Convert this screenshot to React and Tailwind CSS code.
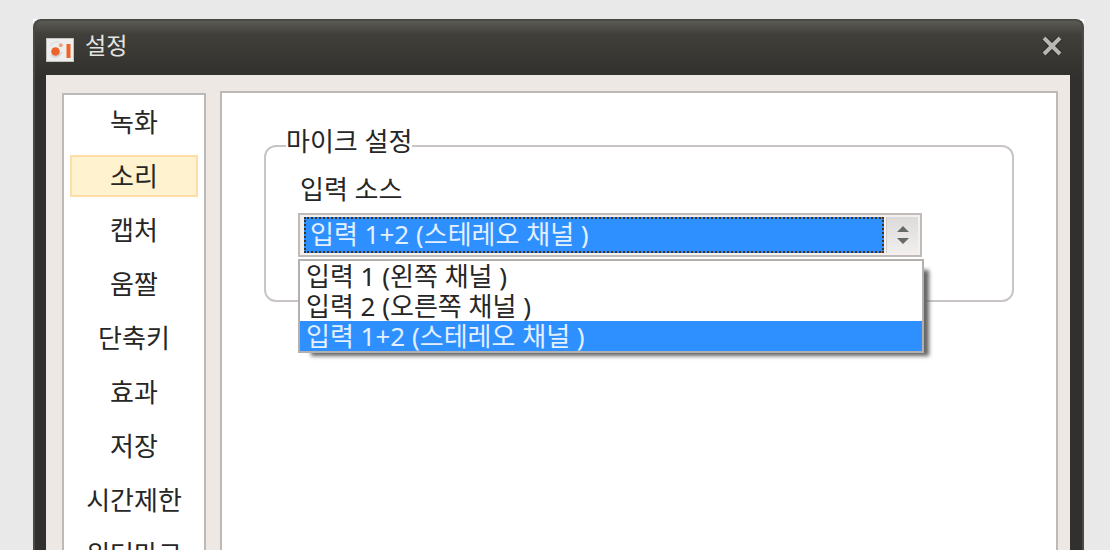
import { useState } from 'react';

const TABS = ['녹화', '소리', '캡처', '움짤', '단축키', '효과', '저장', '시간제한', '워터마크'];

const SOURCES = ['입력 1 (왼쪽 채널 )', '입력 2 (오른쪽 채널 )', '입력 1+2 (스테레오 채널 )'];

function AppLogo() {
  return (
    <svg viewBox="0 0 28 24" className="w-7 h-6 flex-shrink-0" aria-hidden="true">
      <rect x="0.5" y="0.5" width="27" height="23" fill="#efeeee" stroke="#c4c2c0" />
      <path d="M4 8 Q8 3 13 4" fill="none" stroke="#e2e2e2" strokeWidth="2" />
      <path d="M5 17 Q11 22 16 14" fill="none" stroke="#d6d6d6" strokeWidth="2" />
      <circle cx="9.5" cy="13.5" r="4.3" fill="#ec642b" />
      <circle cx="14.8" cy="7.2" r="2" fill="#f0a183" />
      <rect x="20.5" y="6" width="4" height="14" fill="#ec6526" />
    </svg>
  );
}

function TitleBar() {
  return (
    <header className="h-[54px] flex items-start justify-between pl-[11px] pr-5 bg-linear-to-b from-[#5b5a54] from-0% via-[#403f3a] via-25% to-[#32312d]">
      <div className="flex items-start gap-[11px]">
        <div className="pt-[17px]"><AppLogo /></div>
        <h1 className="pt-[7px] text-[23px] leading-[34px] text-[#e6e4e0]">설정</h1>
      </div>
      <button type="button" aria-label="닫기" className="mt-[15px] w-5 h-5">
        <svg viewBox="0 0 20 20" className="w-5 h-5">
          <path d="M2 2 L18 18 M18 2 L2 18" stroke="#272623" strokeWidth="6" fill="none" />
          <path d="M2 2 L18 18 M18 2 L2 18" stroke="#b8b7b4" strokeWidth="4" fill="none" />
        </svg>
      </button>
    </header>
  );
}

function Sidebar({ active, onSelect }) {
  return (
    <nav className="w-36 flex-shrink-0 mt-[2px] border-2 border-b-0 border-[#bdb9b6] bg-white p-[6px] flex flex-col gap-3 overflow-hidden">
      {TABS.map(tab => (
        <button
          key={tab}
          type="button"
          onClick={() => onSelect(tab)}
          className={`h-[42px] flex-shrink-0 border-2 text-[26px] leading-[38px] text-center whitespace-nowrap ${
            active === tab ? 'bg-[#fff3cf] border-[#ffdda6]' : 'border-transparent'
          }`}
        >
          {tab}
        </button>
      ))}
    </nav>
  );
}

function SourceSelect() {
  const [source, setSource] = useState(SOURCES[2]);
  const [open, setOpen] = useState(true);

  const pick = (item) => {
    setSource(item);
    setOpen(false);
  };

  return (
    <div className="relative">
      <div className="h-11 flex border-2 border-[#c0bbb8] bg-[#f3f0ed] p-[2px] pl-1">
        <select
          id="source"
          value={source}
          onChange={e => setSource(e.target.value)}
          className="flex-1 min-w-0 h-9 appearance-none rounded-none border-2 border-dotted border-[#40301f] bg-[#2e8fff] pl-1 pb-[2px] text-[26px] leading-[28px] text-[#e3f0ff] outline-none"
        >
          {SOURCES.map(item => <option key={item}>{item}</option>)}
        </select>
        <button
          type="button"
          aria-label="목록 열기"
          onClick={() => setOpen(!open)}
          className="w-8 h-9 ml-[2px] flex items-center justify-center border-l border-[#d0ccca] bg-linear-to-b from-[#dcdbd9] to-[#f0efed]"
        >
          <svg viewBox="0 0 14 20" className="w-[14px] h-5">
            <path d="M7 1 L13 7 H1 Z M1 13 H13 L7 19 Z" fill="#666a69" />
          </svg>
        </button>
      </div>

      {open && (
        <ul
          role="listbox"
          aria-label="입력 소스"
          className="absolute left-0 -right-[2px] top-[46px] border-2 border-[#b3b0ae] bg-white shadow-[9px_7px_4px_-4px_#666666]"
        >
          {SOURCES.map(item => (
            <li
              key={item}
              role="option"
              aria-selected={source === item}
              onClick={() => pick(item)}
              className={`h-[30px] pl-[6px] text-[26px] leading-[30px] whitespace-nowrap ${
                source === item ? 'bg-[#2e8fff] text-[#e3f0ff]' : 'text-[#262626]'
              }`}
            >
              {item}
            </li>
          ))}
        </ul>
      )}
    </div>
  );
}

export default function App() {
  const [tab, setTab] = useState('소리');

  return (
    <div className="h-screen overflow-hidden flex flex-col bg-[#e9e9e9] pt-[19px] pl-[33px] pr-[26px] text-[#262626] font-['Noto_Sans','Noto_Sans_CJK_KR',sans-serif]">
      <div className="flex-1 min-h-0 flex flex-col bg-white">
        <div className="flex-1 min-h-0 flex flex-col rounded-t-lg border-2 border-b-0 border-[#4a4a45] bg-[#32302e] overflow-hidden">
          <TitleBar />
          <div className="flex-1 min-h-0 ml-[11px] mr-3 flex gap-[14px] bg-[#ede8e4] pt-4 pl-4 pr-3">
            <Sidebar active={tab} onSelect={setTab} />
            <main className="flex-1 min-w-0 border-2 border-b-0 border-[#bdb9b6] bg-white pt-[29px] px-[42px]">
              <fieldset className="h-[180px] border-2 border-[#c9c4c5] rounded-xl pl-8 pr-[90px]">
                <legend className="-ml-3 pb-[10px] text-[26px] leading-[38px]">마이크 설정</legend>
                <label htmlFor="source" className="block pl-[2px] pb-[5px] text-[26px] leading-[38px]">입력 소스</label>
                <SourceSelect />
              </fieldset>
            </main>
          </div>
        </div>
      </div>
    </div>
  );
}
